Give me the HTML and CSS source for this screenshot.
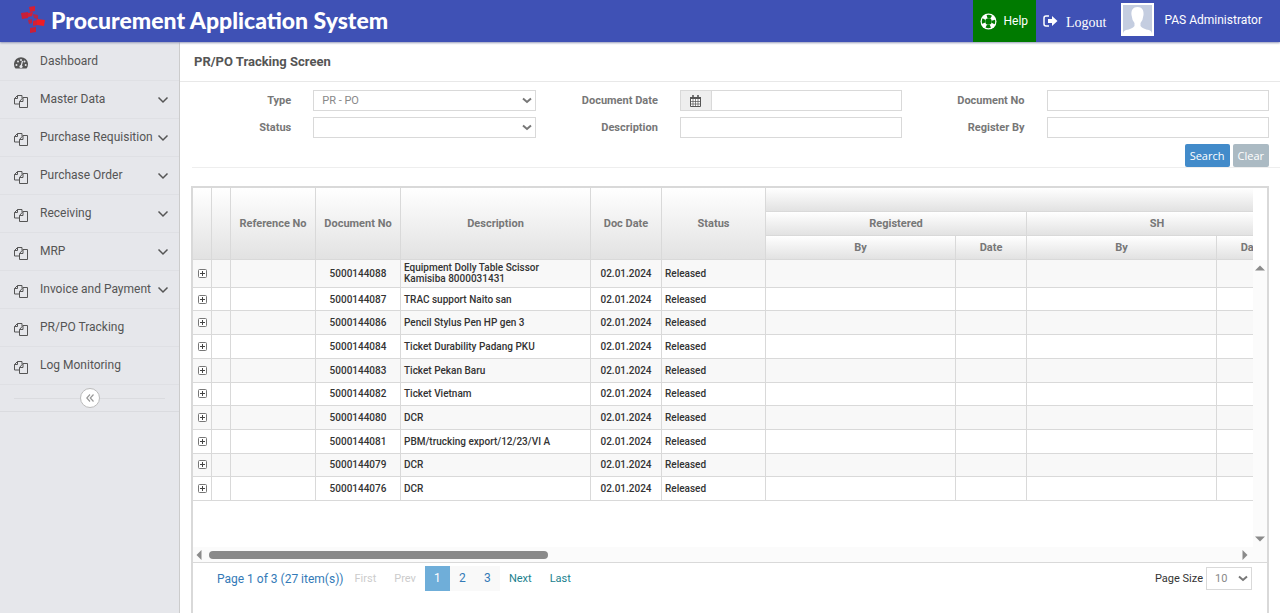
FILE: index.html
```html
<!DOCTYPE html>
<html lang="en">
<head>
    <meta charset="UTF-8">
    <meta name="viewport" content="width=device-width, initial-scale=1">
    <title>Procurement Application System</title>
    <link rel="stylesheet" href="styles.css">
</head>

<body>
    <!-- Shared icons -->
    <svg class="sprite" aria-hidden="true">
        <symbol id="icon-copy" viewBox="0 0 14 14">
            <path d="M5 10H.5V4.500L3.500 1.500H8V4M3.500 1.500V4.500H.5M5.500 13.500V7.500L9 3.500H13.500V13.500ZM9 3.500V7.500H5.500" fill="none" stroke="currentColor"/>
        </symbol>
        <symbol id="icon-chevron" viewBox="0 0 12 8">
            <path d="M1.500 1.500L6 6L10.500 1.500" fill="none" stroke="currentColor" stroke-width="1.500"/>
        </symbol>
        <symbol id="icon-plus" viewBox="0 0 9 9">
            <rect x=".5" y=".5" width="8" height="8" rx="1" fill="#fff" stroke="#777"/>
            <path d="M2 4.500H7M4.500 2V7" stroke="#444"/>
        </symbol>
    </svg>

    <header class="navbar">
        <a href="#" class="brand">
            <svg class="brand-logo" width="24" height="28" viewBox="0 0 24 28">
                <path d="M8 1L14 0V5L9 6Z" fill="#d51f35"/>
                <path d="M0 7L7 6V12L1 13Z" fill="#c81f38"/>
                <path d="M7 7L12 6L11 10L7 11Z" fill="#d51f35"/>
                <path d="M12 8L17 9V13L13 12Z" fill="#b52748"/>
                <path d="M7 14L11 13V17L8 18Z" fill="#b52748"/>
                <path d="M12 15L16 14V19L12 20Z" fill="#d51f35"/>
                <path d="M16 13L24 14L23 20L16 19Z" fill="#f01c24"/>
                <path d="M9 22L15 21V26L9 27Z" fill="#c81f38"/>
            </svg>
            Procurement Application System
        </a>
        <nav class="navbar-user">
            <a href="#" class="help">
                <svg width="17" height="17" viewBox="0 0 17 17">
                    <circle cx="8.500" cy="8.500" r="8" fill="#fff"/>
                    <circle cx="8.500" cy="8.500" r="5" fill="none" stroke="#007a00" stroke-width="3.400" stroke-dasharray="4.200 3.654" stroke-dashoffset="2.100"/>
                    <circle cx="8.500" cy="8.500" r="3.200" fill="#007a00"/>
                </svg>
                Help
            </a>
            <a href="#" class="logout">
                <svg width="15" height="12" viewBox="0 0 15 12">
                    <path d="M6 1H3Q1 1 1 3V9Q1 11 3 11H6" fill="none" stroke="#fff" stroke-width="1.500"/>
                    <path d="M5 4H9V1L14.500 6L9 11V8H5Z" fill="#fff"/>
                </svg>
                <span>Logout</span>
            </a>
            <a href="#" class="user">
                <svg class="avatar" width="33" height="33" viewBox="0 0 33 33">
                    <rect width="33" height="33" fill="#fff"/>
                    <rect x="2" y="2" width="29" height="29" fill="#c4cde0"/>
                    <path d="M16.500 4C12 4 10 7 10.500 12Q11 17 13.500 20V23Q11 26 5 27Q2 28 2 31H31Q31 28 28 27Q22 26 19.500 23V20Q22 17 22.500 12C23 7 21 4 16.500 4Z" fill="#fff"/>
                </svg>
                PAS Administrator
            </a>
        </nav>
    </header>

    <div class="layout">
        <aside class="sidebar">
            <ul class="menu">
                <li><a href="#">
                    <svg class="menu-icon" viewBox="0 0 14 12">
                        <path d="M1.500 11.500A7 7 0 1 1 12.500 11.500Z" fill="currentColor"/>
                        <path d="M7 9.500L8.500 4" stroke="#e6e7eb" stroke-width="1.200"/>
                        <g fill="#e6e7eb"><circle cx="7" cy="9.500" r="1.600"/><circle cx="2.500" cy="8" r="1"/><circle cx="4" cy="4.500" r="1"/><circle cx="7" cy="3" r="1"/><circle cx="10.500" cy="4.500" r="1"/><circle cx="11.700" cy="8" r="1"/></g>
                    </svg>
                    <span>Dashboard</span>
                </a></li>
                <li><a href="#"><svg class="menu-icon"><use href="#icon-copy"/></svg><span>Master Data</span><svg class="chevron"><use href="#icon-chevron"/></svg></a></li>
                <li><a href="#"><svg class="menu-icon"><use href="#icon-copy"/></svg><span>Purchase Requisition</span><svg class="chevron"><use href="#icon-chevron"/></svg></a></li>
                <li><a href="#"><svg class="menu-icon"><use href="#icon-copy"/></svg><span>Purchase Order</span><svg class="chevron"><use href="#icon-chevron"/></svg></a></li>
                <li><a href="#"><svg class="menu-icon"><use href="#icon-copy"/></svg><span>Receiving</span><svg class="chevron"><use href="#icon-chevron"/></svg></a></li>
                <li><a href="#"><svg class="menu-icon"><use href="#icon-copy"/></svg><span>MRP</span><svg class="chevron"><use href="#icon-chevron"/></svg></a></li>
                <li><a href="#"><svg class="menu-icon"><use href="#icon-copy"/></svg><span>Invoice and Payment</span><svg class="chevron"><use href="#icon-chevron"/></svg></a></li>
                <li><a href="#"><svg class="menu-icon"><use href="#icon-copy"/></svg><span>PR/PO Tracking</span></a></li>
                <li><a href="#"><svg class="menu-icon"><use href="#icon-copy"/></svg><span>Log Monitoring</span></a></li>
            </ul>
            <div class="sidebar-toggle">
                <button type="button" aria-label="Collapse sidebar">
                    <svg width="8" height="8" viewBox="0 0 8 8"><path d="M4 .5L.8 4L4 7.500M7.500 .5L4.300 4L7.500 7.500" fill="none" stroke="#999" stroke-width="1.200"/></svg>
                </button>
            </div>
        </aside>

        <main class="content">
            <h1 class="page-title">PR/PO Tracking Screen</h1>

            <form class="filter">
                <div class="filter-fields">
                    <div class="field">
                        <label for="type">Type</label>
                        <select id="type"><option>PR - PO</option></select>
                    </div>
                    <div class="field">
                        <label for="doc-date">Document Date</label>
                        <div class="date-group">
                            <span class="addon">
                                <svg width="11" height="12" viewBox="0 0 11 12">
                                    <path d="M.5 2.500H10.500V11.500H.5Z" fill="#fff" stroke="#555"/>
                                    <path d="M0 2H11V4H0Z" fill="#555"/>
                                    <path d="M3 0V3M8 0V3" stroke="#555" stroke-width="1.600"/>
                                    <path d="M3 4V11.500M5.500 4V11.500M8 4V11.500M.5 6.500H10.500M.5 9H10.500" stroke="#555" stroke-width=".7"/>
                                </svg>
                            </span>
                            <input type="text" id="doc-date">
                        </div>
                    </div>
                    <div class="field">
                        <label for="doc-no">Document No</label>
                        <input type="text" id="doc-no">
                    </div>
                    <div class="field">
                        <label for="status">Status</label>
                        <select id="status"><option></option></select>
                    </div>
                    <div class="field">
                        <label for="description">Description</label>
                        <input type="text" id="description">
                    </div>
                    <div class="field">
                        <label for="register-by">Register By</label>
                        <input type="text" id="register-by">
                    </div>
                </div>
                <div class="filter-actions">
                    <button type="button" class="btn btn-primary">Search</button>
                    <button type="button" class="btn btn-default">Clear</button>
                </div>
            </form>

            <section class="grid">
                <div class="grid-view">
                    <div class="grid-scroll">
                        <table>
                            <colgroup>
                                <col class="col-tool"><col class="col-tool">
                                <col class="col-no"><col class="col-no">
                                <col class="col-by"><col class="col-date"><col class="col-status">
                                <col class="col-by"><col class="col-date">
                                <col class="col-by"><col class="col-date">
                            </colgroup>
                            <thead>
                                <tr>
                                    <th rowspan="3"></th>
                                    <th rowspan="3"></th>
                                    <th rowspan="3">Reference No</th>
                                    <th rowspan="3">Document No</th>
                                    <th rowspan="3">Description</th>
                                    <th rowspan="3">Doc Date</th>
                                    <th rowspan="3">Status</th>
                                    <th colspan="4"></th>
                                </tr>
                                <tr>
                                    <th colspan="2">Registered</th>
                                    <th colspan="2">SH</th>
                                </tr>
                                <tr>
                                    <th>By</th>
                                    <th>Date</th>
                                    <th>By</th>
                                    <th>Date</th>
                                </tr>
                            </thead>
                            <tbody>
                                <tr><td><button type="button" class="expand" aria-label="Expand"><svg><use href="#icon-plus"/></svg></button></td><td></td><td></td><td class="center">5000144088</td><td class="desc">Equipment Dolly Table Scissor Kamisiba 8000031431</td><td class="center">02.01.2024</td><td>Released</td><td></td><td></td><td></td><td></td></tr>
                                <tr><td><button type="button" class="expand" aria-label="Expand"><svg><use href="#icon-plus"/></svg></button></td><td></td><td></td><td class="center">5000144087</td><td class="desc">TRAC support Naito san</td><td class="center">02.01.2024</td><td>Released</td><td></td><td></td><td></td><td></td></tr>
                                <tr><td><button type="button" class="expand" aria-label="Expand"><svg><use href="#icon-plus"/></svg></button></td><td></td><td></td><td class="center">5000144086</td><td class="desc">Pencil Stylus Pen HP gen 3</td><td class="center">02.01.2024</td><td>Released</td><td></td><td></td><td></td><td></td></tr>
                                <tr><td><button type="button" class="expand" aria-label="Expand"><svg><use href="#icon-plus"/></svg></button></td><td></td><td></td><td class="center">5000144084</td><td class="desc">Ticket Durability Padang PKU</td><td class="center">02.01.2024</td><td>Released</td><td></td><td></td><td></td><td></td></tr>
                                <tr><td><button type="button" class="expand" aria-label="Expand"><svg><use href="#icon-plus"/></svg></button></td><td></td><td></td><td class="center">5000144083</td><td class="desc">Ticket Pekan Baru</td><td class="center">02.01.2024</td><td>Released</td><td></td><td></td><td></td><td></td></tr>
                                <tr><td><button type="button" class="expand" aria-label="Expand"><svg><use href="#icon-plus"/></svg></button></td><td></td><td></td><td class="center">5000144082</td><td class="desc">Ticket Vietnam</td><td class="center">02.01.2024</td><td>Released</td><td></td><td></td><td></td><td></td></tr>
                                <tr><td><button type="button" class="expand" aria-label="Expand"><svg><use href="#icon-plus"/></svg></button></td><td></td><td></td><td class="center">5000144080</td><td class="desc">DCR</td><td class="center">02.01.2024</td><td>Released</td><td></td><td></td><td></td><td></td></tr>
                                <tr><td><button type="button" class="expand" aria-label="Expand"><svg><use href="#icon-plus"/></svg></button></td><td></td><td></td><td class="center">5000144081</td><td class="desc">PBM/trucking export/12/23/VI A</td><td class="center">02.01.2024</td><td>Released</td><td></td><td></td><td></td><td></td></tr>
                                <tr><td><button type="button" class="expand" aria-label="Expand"><svg><use href="#icon-plus"/></svg></button></td><td></td><td></td><td class="center">5000144079</td><td class="desc">DCR</td><td class="center">02.01.2024</td><td>Released</td><td></td><td></td><td></td><td></td></tr>
                                <tr><td><button type="button" class="expand" aria-label="Expand"><svg><use href="#icon-plus"/></svg></button></td><td></td><td></td><td class="center">5000144076</td><td class="desc">DCR</td><td class="center">02.01.2024</td><td>Released</td><td></td><td></td><td></td><td></td></tr>
                            </tbody>
                        </table>
                    </div>
                    <div class="vbar">
                        <svg width="10" height="6" viewBox="0 0 10 6"><path d="M0 5.500L5 .5L10 5.500Z" fill="#8a8a8a"/></svg>
                        <svg width="10" height="6" viewBox="0 0 10 6"><path d="M0 .5L5 5.500L10 .5Z" fill="#8a8a8a"/></svg>
                    </div>
                </div>
                <div class="hbar">
                    <svg width="6" height="10" viewBox="0 0 6 10"><path d="M5.500 0L.5 5L5.500 10Z" fill="#8a8a8a"/></svg>
                    <div class="hbar-track"><div class="hbar-thumb"></div></div>
                    <svg width="6" height="10" viewBox="0 0 6 10"><path d="M.5 0L5.500 5L.5 10Z" fill="#8a8a8a"/></svg>
                </div>

                <div class="pager">
                    <span class="pager-summary">Page 1 of 3 (27 item(s))</span>
                    <button type="button" class="pager-step" disabled>First</button>
                    <button type="button" class="pager-step" disabled>Prev</button>
                    <div class="pager-pages">
                        <a href="#" class="active">1</a>
                        <a href="#">2</a>
                        <a href="#">3</a>
                    </div>
                    <a href="#" class="pager-step">Next</a>
                    <a href="#" class="pager-step">Last</a>
                    <div class="page-size">
                        <label for="page-size">Page Size</label>
                        <select id="page-size"><option>10</option></select>
                    </div>
                </div>
            </section>
        </main>
    </div>
</body>
</html>
```
FILE: styles.css
```css
:root {
    --blue: #3f51b5;
    --green: #007a00;
    --side: #e6e7eb;
    --line: #d9d9d9;
    --text: #555;
}

* {
    box-sizing: border-box;
}

body {
    margin: 0;
    min-height: 100vh;
    display: flex;
    flex-direction: column;
    font-family: Roboto, "Liberation Sans", Arial, sans-serif;
    font-size: 12px;
    color: var(--text);
    background: #fff;
}

a {
    color: inherit;
    text-decoration: none;
}

button, input, select {
    font: inherit;
    color: inherit;
    margin: 0;
}

.sprite {
    display: none;
}

/* Navbar */
.navbar {
    display: flex;
    justify-content: space-between;
    height: 42px;
    background: var(--blue);
    box-shadow: 0 1px 2px #9499b8;
    color: #fff;
    position: relative;
}

.brand {
    display: flex;
    align-items: center;
    gap: 6px;
    padding: 0 0 3px 21px;
    font-family: Lato, sans-serif;
    font-size: 23px;
    font-weight: 900;
    white-space: nowrap;
}

.navbar-user {
    display: flex;
}

.navbar-user a {
    display: flex;
    align-items: center;
    white-space: nowrap;
}

.help {
    gap: 6px;
    padding: 0 8px 0 7px;
    background: var(--green);
}

.logout {
    gap: 8px;
    padding: 0 14px 0 7px;
    font-family: "Liberation Serif", serif;
    font-size: 14px;
}

.logout span {
    padding-top: 3px;
}

.user {
    gap: 11px;
    padding: 0 18px 3px 0;
}

.layout {
    display: flex;
    flex: 1;
}

/* Sidebar */
.sidebar {
    width: 180px;
    flex-shrink: 0;
    background: var(--side);
    border-right: 1px solid #ccc;
}

.menu {
    list-style: none;
    margin: 0;
    padding: 1px 0 0;
}

.menu a {
    display: flex;
    align-items: center;
    height: 38px;
    padding: 0 10px 0 14px;
    border-bottom: 1px solid #dfe0e4;
}

.menu span {
    flex: 1;
    padding: 0 0 2px 12px;
    white-space: nowrap;
}

.menu-icon {
    width: 14px;
    height: 14px;
    margin-top: 3px;
}

.chevron {
    width: 12px;
    height: 8px;
}

.sidebar-toggle {
    display: flex;
    align-items: center;
    height: 27px;
    padding: 0 14px;
    border-bottom: 1px solid #dadbdf;
}

.sidebar-toggle::before,
.sidebar-toggle::after {
    content: "";
    flex: 1;
    border-top: 1px solid #dadbdf;
}

.sidebar-toggle button {
    display: flex;
    align-items: center;
    justify-content: center;
    width: 20px;
    height: 20px;
    padding: 0;
    border: 1px solid #bbb;
    border-radius: 50%;
    background: #fff;
}

/* Content */
.content {
    flex: 1;
    min-width: 0;
    display: flex;
    flex-direction: column;
}

.page-title {
    margin: 0;
    height: 40px;
    padding-left: 14px;
    border-bottom: 1px solid #e8e8e8;
    font-size: 13px;
    line-height: 40px;
}

/* Filter */
.filter {
    padding-top: 8px;
}

.filter-fields {
    display: grid;
    grid-template-columns: repeat(3, 1fr);
    row-gap: 6px;
}

.field {
    display: grid;
    grid-template-columns: 1fr 2fr;
    column-gap: 22px;
    align-items: center;
    padding-right: 11px;
}

.field label {
    font-size: 11px;
    font-weight: 700;
    text-align: right;
    color: #777;
}

.field input, .field select, .page-size select {
    width: 100%;
    min-width: 0;
    height: 21px;
    padding: 0 8px;
    border: 1px solid var(--line);
    border-radius: 0;
    background: #fff;
    font-size: 11px;
    color: #888;
}

.field select, .page-size select {
    appearance: none;
    background: #fff url("data:image/svg+xml,%3Csvg xmlns='http://www.w3.org/2000/svg' viewBox='0 0 10 7'%3E%3Cpath d='M1 1.500L5 5L9 1.500' fill='none' stroke='%23777' stroke-width='2'/%3E%3C/svg%3E") no-repeat right 3px center / 10px 7px;
}

.date-group {
    display: flex;
}

.addon {
    display: flex;
    align-items: center;
    justify-content: center;
    width: 31px;
    flex-shrink: 0;
    background: #eee;
    border: 1px solid var(--line);
    border-right: 0;
}

.filter-actions {
    display: flex;
    justify-content: flex-end;
    gap: 3px;
    margin-left: 12px;
    padding: 6px 11px 0 0;
    border-bottom: 1px solid #eee;
}

.btn {
    height: 23px;
    padding: 0 5px;
    border: 0;
    border-radius: 2px;
    font-family: "Open Sans", sans-serif;
    font-size: 11px;
    color: #fff;
}

.btn-primary {
    background: #428bca;
}

.btn-default {
    background: #abbac3;
}

/* Grid */
.grid {
    flex: 1;
    margin: 18px 11px 0;
    border: 2px solid var(--line);
    border-bottom: 0;
}

.grid-view {
    display: flex;
    height: 359px;
}

.grid-scroll {
    flex: 1;
    min-width: 0;
    overflow: hidden;
}

.grid table {
    table-layout: fixed;
    width: 1095px;
    height: 313px;
    border-collapse: separate;
    border-spacing: 0;
    font-size: 10px;
    font-weight: 500;
    color: #333;
}

.col-tool { width: 19px; }
.col-no { width: 85px; }
.col-by { width: 190px; }
.col-date { width: 71px; }
.col-status { width: 104px; }

.grid th, .grid td {
    border: solid var(--line);
    border-width: 0 1px 1px 0;
}

.grid thead tr {
    height: 24px;
}

.grid th {
    padding: 0 4px;
    background: linear-gradient(#fff, #e2e2e2);
    font-size: 11px;
    color: #777;
    white-space: nowrap;
}

.grid td {
    height: 23px;
    padding: 2px 3px;
    line-height: 11px;
}

.grid tbody tr:nth-child(odd) {
    background: #f8f8f8;
}

.grid td.center {
    text-align: center;
}

.grid td.desc {
    padding-right: 20px;
}

.expand {
    display: block;
    margin: 0 auto;
    width: 9px;
    height: 9px;
    padding: 0;
    border: 0;
    background: none;
}

.expand svg {
    display: block;
    width: 9px;
    height: 9px;
}

.vbar {
    display: flex;
    flex-direction: column;
    align-items: center;
    justify-content: space-between;
    width: 14px;
    margin-top: 72px;
    padding: 5px 0;
    background: #fbfbfb;
}

.hbar {
    display: flex;
    align-items: center;
    gap: 7px;
    height: 16px;
    padding: 0 19px 0 3px;
    background: #fbfbfb;
    border-bottom: 1px solid var(--line);
}

.hbar-track {
    flex: 1;
}

.hbar-thumb {
    width: 33%;
    height: 8px;
    border-radius: 4px;
    background: #8a8a8a;
}

/* Pager */
.pager {
    display: flex;
    align-items: center;
    padding: 3px 15px 0 24px;
}

.pager-summary {
    margin-right: 2px;
    color: #337ab7;
}

.pager-step {
    padding: 0 9px;
    border: 0;
    background: none;
    font-size: 11px;
    color: #1a7f8e;
}

.pager-step:disabled {
    color: #ccc;
}

.pager-pages {
    display: flex;
    background: #f9f9f9;
    color: #337ab7;
}

.pager-pages a {
    width: 25px;
    line-height: 25px;
    text-align: center;
}

.pager-pages .active {
    background: #6faed9;
    color: #fff;
}

.page-size {
    display: flex;
    align-items: center;
    gap: 3px;
    margin-left: auto;
    font-size: 11px;
    color: #333;
}

.page-size select {
    width: 46px;
    height: 23px;
}
```
